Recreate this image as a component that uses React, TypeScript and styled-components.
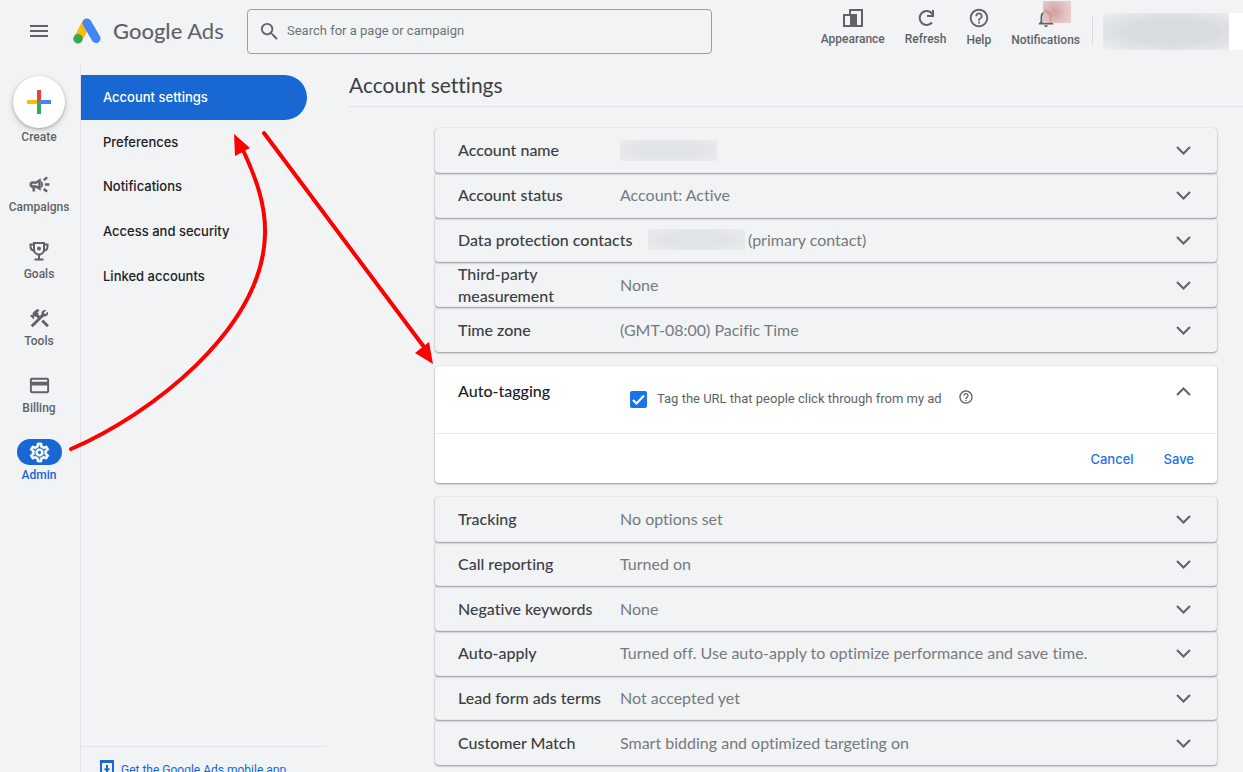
import React from 'react';
import styled, { createGlobalStyle } from 'styled-components';
import {
  MdConstruction,
  MdCreditCard,
  MdHelpOutline,
  MdNotificationsNone,
  MdOutlineCampaign,
  MdOutlineSettings,
  MdSearch,
} from 'react-icons/md';

const color = {
  page: '#f1f3f5',
  text: '#3c4043',
  nav: '#202124',
  muted: '#5f6368',
  value: '#767a7e',
  blue: '#1967d2',
  action: '#1a73e8',
  line: '#e0e2e5',
};

const display = `Lato, "Liberation Sans", sans-serif`;
const ui = `Inter, "Liberation Sans", sans-serif`;
const body = `Roboto, "Liberation Sans", sans-serif`;

const GlobalStyle = createGlobalStyle`
  *, *::before, *::after { box-sizing: border-box; }
  body {
    margin: 0;
    background: ${color.page};
    font-family: ${body};
    color: ${color.text};
  }
  button { border: 0; padding: 0; background: none; font: inherit; color: inherit; cursor: pointer; }
  svg { display: block; flex: none; }
`;

const Page = styled.div`
  position: relative;
  display: flex;
  flex-direction: column;
  height: 100vh;
  overflow: hidden;
`;

/* Header */

const Header = styled.header`
  display: flex;
  flex: none;
  align-items: center;
  height: 64px;
  padding: 0 0 2px 30px;
`;

const MenuButton = styled.button`
  margin-right: 25px;
  color: ${color.muted};
`;

const Brand = styled.a`
  display: flex;
  align-items: center;
  gap: 12px;
  width: 174px;
  color: ${color.muted};
  font: 400 22px/28px ${display};
  text-decoration: none;
  white-space: nowrap;

  b { font-weight: 500; }
`;

const SearchBox = styled.label`
  display: flex;
  flex: 0 1 465px;
  align-items: center;
  gap: 6px;
  height: 45px;
  padding: 0 10px;
  border: 1px solid #9aa0a6;
  border-radius: 4px;
  color: ${color.muted};

  input {
    flex: 1;
    min-width: 0;
    border: 0;
    padding: 0;
    outline: 0;
    background: none;
    color: ${color.text};
    font: 400 13px/20px ${body};
  }
  input::placeholder { color: #6f7377; opacity: 1; }
`;

const Tools = styled.div`
  display: flex;
  gap: 20px;
  height: 48px;
  margin-left: auto;
`;

const ToolButton = styled.button`
  position: relative;
  display: flex;
  flex-direction: column;
  align-items: center;
  justify-content: center;
  gap: 3px;
  height: 41px;
  color: ${color.muted};
  font: 500 12px/16px ${body};
`;

const AlertBadge = styled.span`
  position: absolute;
  left: 32px;
  top: -6px;
  width: 28px;
  height: 22px;
  background: radial-gradient(circle at 40% 50%, #d09a9a 15%, #dfb8b6 55%, #e6cfce);
  opacity: 0.85;
`;

const HeaderDivider = styled.span`
  width: 1px;
  height: 30px;
  margin: 0 10px 0 12px;
  background: #dadce0;
`;

const Profile = styled.div`
  width: 140px;
  height: 37px;
  border-right: 14px solid #fff;
  background: radial-gradient(ellipse at 55% 50%, #d9dcde 45%, #e3e6e8 75%, #edeff1);
`;

/* Columns */

const Columns = styled.div`
  display: flex;
  flex: 1;
  min-height: 0;
`;

const Rail = styled.nav`
  display: flex;
  flex: none;
  flex-direction: column;
  align-items: center;
  width: 81px;
  padding: 12px 2px 0 0;
  border-right: 1px solid ${color.line};
`;

const CreateButton = styled.button`
  display: flex;
  flex-direction: column;
  align-items: center;
  gap: 1px;
  margin-bottom: 26px;
  color: ${color.muted};
  font: 500 12px/16px ${body};
`;

const CreateCircle = styled.span`
  display: grid;
  place-items: center;
  width: 52px;
  height: 52px;
  border-radius: 50%;
  background: #fff;
  box-shadow: 0 1px 3px rgba(60, 64, 67, 0.35), 0 3px 7px rgba(60, 64, 67, 0.16);
`;

const RailLink = styled.a<{ $active?: boolean }>`
  display: flex;
  flex: none;
  flex-direction: column;
  align-items: center;
  gap: 2px;
  height: 67px;
  color: ${p => (p.$active ? color.blue : color.muted)};
  font: 500 12px/16px ${body};
  text-decoration: none;
`;

const RailIcon = styled.span<{ $active?: boolean }>`
  display: grid;
  place-items: center;
  width: 45px;
  height: 26px;
  border-radius: 13px;
  background: ${p => (p.$active ? color.blue : 'transparent')};
  color: ${p => (p.$active ? '#fff' : color.muted)};

  path[d^='M0 0h24'] { stroke: none; }
`;

const SideNav = styled.nav`
  display: flex;
  flex: none;
  flex-direction: column;
  justify-content: space-between;
  width: 245px;
  padding-top: 11px;
`;

const SideList = styled.div`
  display: grid;
  grid-auto-rows: 1fr;
  min-height: 223px;
  margin-right: 19px;
`;

const SideLink = styled.a<{ $active?: boolean }>`
  display: flex;
  align-items: center;
  padding-left: 22px;
  border-radius: 0 23px 23px 0;
  background: ${p => (p.$active ? color.blue : 'transparent')};
  color: ${p => (p.$active ? '#fff' : color.nav)};
  font: 500 13px/20px ${ui};
  text-decoration: none;
`;

const SideFooter = styled.a`
  display: flex;
  gap: 7px;
  height: 26px;
  padding: 13px 0 0 19px;
  border-top: 1px solid ${color.line};
  color: ${color.blue};
  font: 400 12px/20px ${body};
  text-decoration: none;
`;

/* Settings */

const Main = styled.main`
  flex: 1;
  min-width: 0;
  padding-left: 23px;
  font-variant-ligatures: none;
`;

const Title = styled.h1`
  margin: 0;
  padding: 7px 0;
  border-bottom: 1px solid ${color.line};
  font-family: ${display};
  font-size: 21px;
  font-weight: 400;
  line-height: 28px;
`;

const Panels = styled.div`
  display: flex;
  flex-direction: column;
  gap: 14px;
  margin: 21px 26px 0 86px;
`;

const Group = styled.div<{ $height: number }>`
  display: grid;
  grid-auto-rows: 1fr;
  min-height: ${p => p.$height}px;
`;

const Card = styled.section`
  border-radius: 4px;
  background: #fff;
  box-shadow: 0 1px 2px rgba(60, 64, 67, 0.5), 0 0 1px rgba(60, 64, 67, 0.2);
`;

const Row = styled.button`
  display: flex;
  align-items: center;
  width: 100%;
  padding: 0 26px 0 23px;
  border-radius: 4px;
  box-shadow: 0 1px 2px rgba(60, 64, 67, 0.5), 0 0 1px rgba(60, 64, 67, 0.2);
  font-family: ${display};
  font-size: 16px;
  line-height: 22px;
  font-variant-ligatures: none;
  text-align: left;
`;

const RowLabel = styled.span<{ $wide?: boolean }>`
  flex: none;
  width: ${p => (p.$wide ? 190 : 162)}px;
  padding-right: ${p => (p.$wide ? 0 : 12)}px;
  color: ${color.text};
  font-weight: 500;
`;

const RowValue = styled.span`
  display: flex;
  flex: 1;
  align-items: center;
  gap: 3px;
  color: ${color.value};
`;

const Redacted = styled.span`
  width: 97px;
  height: 21px;
  background: radial-gradient(ellipse, #e1e4e6 40%, #e9ebed);
`;

const OpenRow = styled.div`
  display: flex;
  align-items: flex-start;
  height: 68px;
  padding: 14px 26px 0 23px;
  border-bottom: 1px solid #e8eaed;
`;

const CardTitle = styled.h2`
  flex: none;
  width: 172px;
  margin: 0;
  color: ${color.nav};
  font-family: ${display};
  font-size: 16px;
  font-weight: 500;
  line-height: 22px;
`;

const CheckLabel = styled.label`
  display: flex;
  align-items: center;
  gap: 10px;
  height: 22px;
  font-size: 13px;
  line-height: 20px;
`;

const TagSetting = styled.div`
  display: flex;
  flex: 1;
  gap: 16px;
  padding-top: 8px;
  color: ${color.muted};

  button { height: 18px; }
`;

const Checkbox = styled.input`
  appearance: none;
  width: 17px;
  height: 17px;
  margin: 0;
  border: 2px solid ${color.muted};
  border-radius: 2px;

  &:checked {
    border: 0;
    background: ${color.action}
      url("data:image/svg+xml,%3Csvg xmlns='http://www.w3.org/2000/svg' viewBox='0 0 17 17'%3E%3Cpath d='M3 9l3.5 3.5L14 4.5' fill='none' stroke='white' stroke-width='2'/%3E%3C/svg%3E");
  }
`;

const Actions = styled.div`
  display: flex;
  align-items: center;
  justify-content: flex-end;
  gap: 30px;
  height: 49px;
  padding-right: 23px;
  color: ${color.action};
  font: 500 13px/20px ${ui};
`;

const Arrows = styled.svg`
  position: absolute;
  left: 0;
  top: 0;
  pointer-events: none;
`;

/* Icons */

const MenuIcon = () => (
  <svg width="18" height="12" stroke="currentColor" strokeWidth="2">
    <path d="M0 1h18M0 6h18M0 11h18" />
  </svg>
);

const AdsLogo = () => (
  <svg width="28" height="26" viewBox="0 0 28 26" strokeLinecap="round" strokeWidth="9">
    <path d="M5 21L13.5 5" stroke="#fbbc04" />
    <path d="M14 5l9 15.5" stroke="#4285f4" />
    <circle cx="5" cy="20.7" r="4.7" fill="#34a853" />
  </svg>
);

const AppearanceIcon = () => (
  <svg width="20" height="20" fill="none" stroke="currentColor" strokeWidth="2">
    <path d="M7 7V2h12v16H1V7h12v11" />
    <path d="M8 7h5v11H8z" fill="currentColor" />
  </svg>
);

const RefreshIcon = () => (
  <svg width="20" height="20" fill="none" stroke="currentColor" strokeWidth="2">
    <path d="M16 14.500A7 7 0 1 1 16 5.500L17.500 7.500" />
    <path d="M17 2v6h-6" />
  </svg>
);

const PlusIcon = () => (
  <svg width="24" height="24">
    <path fill="#ea4335" d="M10 0h4v10l-4 4z" />
    <path fill="#fbbc04" d="M0 10h10v4H0z" />
    <path fill="#34a853" d="M10 14l4-4v14h-4z" />
    <path fill="#4285f4" d="M14 10h10v4H10z" />
  </svg>
);

const TrophyIcon = () => (
  <svg width="20" height="20" fill="none" stroke="currentColor" strokeWidth="2">
    <path d="M5 2h10v6.500a5 5 0 0 1-10 0z" />
    <path d="M5 3.500H1.500v2C1.500 8 3 9.500 5.500 9.800M15 3.500h3.500v2c0 2.500-1.500 4-4 4.300M10 13v5M5.500 18.500h9" />
    <circle cx="10" cy="7.500" r="2" fill="currentColor" stroke="none" />
  </svg>
);

const Chevron = ({ up }: { up?: boolean }) => (
  <svg width="15" height="22" fill="none" stroke="#5f6368" strokeWidth="2">
    <path d={up ? 'M1 15l6.500-6.500L14 15' : 'M1 8l6.500 6.500L14 8'} />
  </svg>
);

const PhoneDownloadIcon = () => (
  <svg width="14" height="20" fill="none" stroke="currentColor" strokeWidth="2">
    <path d="M1 1h12v18H1zM1 2h12M7 5v7" />
    <path d="M3.500 8.500h7L7 12z" fill="currentColor" stroke="none" />
  </svg>
);

/* Data */

type Setting = { label: string; value?: string; redacted?: boolean; wide?: boolean };

const accountRows: Setting[] = [
  { label: 'Account name', redacted: true },
  { label: 'Account status', value: 'Account: Active' },
  { label: 'Data protection contacts', value: '(primary contact)', redacted: true, wide: true },
  { label: 'Third-party measurement', value: 'None' },
  { label: 'Time zone', value: '(GMT-08:00) Pacific Time' },
];

const trackingRows: Setting[] = [
  { label: 'Tracking', value: 'No options set' },
  { label: 'Call reporting', value: 'Turned on' },
  { label: 'Negative keywords', value: 'None' },
  { label: 'Auto-apply', value: 'Turned off. Use auto-apply to optimize performance and save time.' },
  { label: 'Lead form ads terms', value: 'Not accepted yet' },
  { label: 'Customer Match', value: 'Smart bidding and optimized targeting on' },
];

const railItems = [
  { label: 'Campaigns', icon: <MdOutlineCampaign size={23} stroke="currentColor" strokeWidth="0.6" /> },
  { label: 'Goals', icon: <TrophyIcon /> },
  { label: 'Tools', icon: <MdConstruction size={23} /> },
  { label: 'Billing', icon: <MdCreditCard size={23} /> },
  {
    label: 'Admin',
    icon: <MdOutlineSettings size={23} stroke="currentColor" strokeWidth="0.7" />,
    active: true,
  },
];

const sideItems = [
  'Account settings',
  'Preferences',
  'Notifications',
  'Access and security',
  'Linked accounts',
];

const SettingGroup = ({ rows, height }: { rows: Setting[]; height: number }) => (
  <Group $height={height}>
    {rows.map(row => (
      <Row key={row.label} type="button" aria-expanded="false">
        <RowLabel $wide={row.wide}>{row.label}</RowLabel>
        <RowValue>
          {row.redacted && <Redacted />}
          {row.value}
        </RowValue>
        <Chevron />
      </Row>
    ))}
  </Group>
);

export default function App() {
  return (
    <Page>
      <GlobalStyle />
      <Header>
        <MenuButton type="button" aria-label="Main menu"><MenuIcon /></MenuButton>
        <Brand href="#home">
          <AdsLogo />
          <span><b>Google</b> Ads</span>
        </Brand>
        <SearchBox>
          <MdSearch size={23} />
          <input type="search" aria-label="Search" placeholder="Search for a page or campaign" />
        </SearchBox>
        <Tools>
          <ToolButton type="button"><AppearanceIcon />Appearance</ToolButton>
          <ToolButton type="button"><RefreshIcon />Refresh</ToolButton>
          <ToolButton type="button"><MdHelpOutline size={22} />Help</ToolButton>
          <ToolButton type="button"><MdNotificationsNone size={22} />Notifications<AlertBadge /></ToolButton>
        </Tools>
        <HeaderDivider />
        <Profile />
      </Header>

      <Columns>
        <Rail aria-label="Sections">
          <CreateButton type="button">
            <CreateCircle><PlusIcon /></CreateCircle>
            Create
          </CreateButton>
          {railItems.map(item => (
            <RailLink key={item.label} href={`#${item.label}`} $active={item.active}>
              <RailIcon $active={item.active}>{item.icon}</RailIcon>
              {item.label}
            </RailLink>
          ))}
        </Rail>

        <SideNav aria-label="Admin">
          <SideList>
            {sideItems.map((item, i) => (
              <SideLink key={item} href="#admin" $active={i === 0}>{item}</SideLink>
            ))}
          </SideList>
          <SideFooter href="#mobile"><PhoneDownloadIcon />Get the Google Ads mobile app</SideFooter>
        </SideNav>

        <Main>
          <Title>Account settings</Title>
          <Panels>
            <SettingGroup rows={accountRows} height={224} />
            <Card>
              <OpenRow>
                <CardTitle>Auto-tagging</CardTitle>
                <TagSetting>
                  <CheckLabel>
                    <Checkbox type="checkbox" defaultChecked />
                    Tag the URL that people click through from my ad
                  </CheckLabel>
                  <button type="button" aria-label="About auto-tagging"><MdHelpOutline size={16} /></button>
                </TagSetting>
                <button type="button" aria-label="Collapse"><Chevron up /></button>
              </OpenRow>
              <Actions>
                <button type="button">Cancel</button>
                <button type="button">Save</button>
              </Actions>
            </Card>
            <SettingGroup rows={trackingRows} height={268} />
          </Panels>
        </Main>
      </Columns>

      <Arrows width="440" height="460" fill="none" stroke="#f00" strokeWidth="4" strokeLinecap="round" aria-hidden="true">
        <path d="M71 449C150 415 262 330 265 235C266 205 256 178 243 150" />
        <path d="M264 133Q344 240 424 347" />
        <path d="M234 134l16 14-15 8zM433 364l-4-22-14 11z" fill="#f00" stroke="none" />
      </Arrows>
    </Page>
  );
}
